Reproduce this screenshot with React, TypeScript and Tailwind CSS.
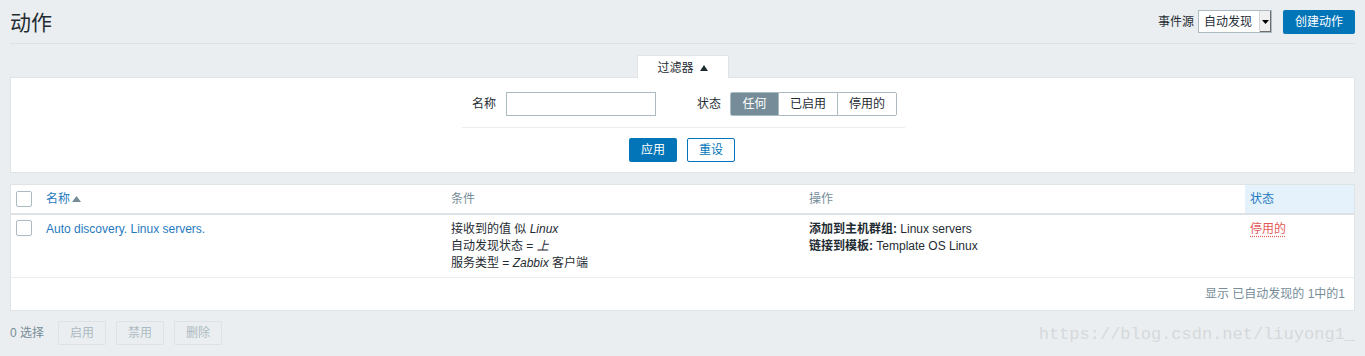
import { useState } from 'react';

const FONT = "font-['Liberation_Sans','Noto_Sans_CJK_SC',sans-serif]";

function Checkbox() {
  return <div className="w-4 h-4 border border-[#acbbc2] bg-white rounded-[2px]" />;
}

export default function App() {
  const [status, setStatus] = useState('任何');

  return (
    <div className={`relative min-h-[356px] bg-[#ebeef0] px-[10px] text-[12px] text-[#1f2c33] ${FONT}`}>
      {/* Header */}
      <div className="flex items-center justify-between h-[44px] border-b border-[#dde2e6]">
        <h1 className="text-[21px] text-[#1f2c33] leading-none pt-[1px]">动作</h1>
        <div className="flex items-center">
          <span className="mr-[4px]">事件源</span>
          <div className="flex items-stretch h-[23px] w-[74px] border border-[#acbbc2] bg-white mr-[11px]">
            <span className="flex-1 pl-[5px] flex items-center">自动发现</span>
            <span className="w-[12px] flex items-center justify-center bg-[#f0f0f0] border-l border-[#d6d6d6] shadow-[inset_-1px_-1px_0_#6d6d6d]">
              <svg width="7" height="4" viewBox="0 0 7 4"><path d="M0 0h7L3.5 4z" fill="#000" /></svg>
            </span>
          </div>
          <button className="h-[24px] w-[72px] bg-[#0275b8] text-white rounded-[2px]">创建动作</button>
        </div>
      </div>

      {/* Filter */}
      <div className="mt-[11px] flex justify-center">
        <div className="w-[92px] h-[23px] bg-white border border-b-0 border-[#dfe4e7] flex items-center justify-center gap-[6px] -mb-px relative z-10 pt-[1px]">
          <span>过滤器</span>
          <svg width="8" height="6" viewBox="0 0 8 6"><path d="M0 6L4 0l4 6z" fill="#1f2c33" /></svg>
        </div>
      </div>
      <div className="bg-white border border-[#dfe4e7] h-[96px] flex flex-col items-center">
        <div className="w-[443px] flex items-center h-[50px] pt-[2px] border-b border-[#ebeef0] ml-[2px]">
          <span className="ml-[10px] w-[34px]">名称</span>
          <input className="w-[150px] h-[24px] border border-[#acbbc2] outline-none px-1" />
          <span className="ml-[41px] w-[33px]">状态</span>
          <div className="flex h-[24px] border border-[#acbbc2] rounded-[2px] overflow-hidden">
            {['任何', '已启用', '停用的'].map((s, i) => (
              <button
                key={s}
                onClick={() => setStatus(s)}
                className={`h-full ${i === 0 ? 'w-[47px]' : 'w-[59px]'} ${i > 0 ? 'border-l border-[#acbbc2]' : ''} ${
                  status === s ? 'bg-[#768d99] text-white' : 'bg-white text-[#1f2c33]'
                }`}
              >
                {s}
              </button>
            ))}
          </div>
        </div>
        <div className="flex gap-[10px] mt-[10px] ml-[-1px]">
          <button className="w-[48px] h-[24px] bg-[#0275b8] text-white rounded-[2px]">应用</button>
          <button className="w-[48px] h-[24px] bg-white text-[#0275b8] border border-[#0275b8] rounded-[2px]">重设</button>
        </div>
      </div>

      {/* Table */}
      <div className="mt-[11px] bg-white border border-[#dfe4e7]">
        <div className="grid grid-cols-[30px_405px_358px_441px_1fr] h-[30px] border-b-2 border-[#dde2e6] items-stretch">
          <div className="pl-[5px] flex items-center"><Checkbox /></div>
          <div className="pl-[5px] flex items-center text-[#1f7ac0] gap-[2px]">
            名称
            <svg width="9" height="6" viewBox="0 0 9 6"><path d="M0 6L4.5 0 9 6z" fill="#768d99" /></svg>
          </div>
          <div className="pl-[5px] flex items-center text-[#768d99]">条件</div>
          <div className="pl-[5px] flex items-center text-[#768d99]">操作</div>
          <div className="pl-[5px] flex items-center text-[#1f7ac0] bg-[#e5f2fb]">状态</div>
        </div>
        <div className="grid grid-cols-[30px_405px_358px_441px_1fr] h-[63px] border-b border-[#ebeef0] leading-[17px] pt-[6px]">
          <div className="pl-[5px] -mt-[1px]"><Checkbox /></div>
          <div className="pl-[5px] text-[#1f7ac0]">Auto discovery. Linux servers.</div>
          <div className="pl-[5px]">
            <div>接收到的值 似 <i>Linux</i></div>
            <div>自动发现状态 = <i>上</i></div>
            <div>服务类型 = <i>Zabbix</i> 客户端</div>
          </div>
          <div className="pl-[5px]">
            <div><b>添加到主机群组:</b> Linux servers</div>
            <div><b>链接到模板:</b> Template OS Linux</div>
          </div>
          <div className="pl-[5px]">
            <span className="text-[#e45959] underline decoration-dotted decoration-[#e45959] underline-offset-[3px]">停用的</span>
          </div>
        </div>
        <div className="h-[32px] flex items-center justify-end pr-[9px] text-[#768d99]">
          显示 已自动发现的 1中的1
        </div>
      </div>

      {/* Action bar */}
      <div className="flex items-center mt-[10px] h-[24px]">
        <span className="text-[#768d99] mr-[14px]">0 选择</span>
        {['启用', '禁用', '删除'].map((t) => (
          <button
            key={t}
            disabled
            className="w-[48px] h-[24px] mr-[10px] bg-[#ebeef0] border border-[#dde2e6] text-[#acbbc2] rounded-[2px]"
          >
            {t}
          </button>
        ))}
      </div>

      {/* Watermark */}
      <div className="absolute right-[10px] top-[322px] font-['Liberation_Mono',monospace] text-[17px] text-[#d5d9dc] pointer-events-none">
        https://blog.csdn.net/liuyong1_
      </div>
    </div>
  );
}
